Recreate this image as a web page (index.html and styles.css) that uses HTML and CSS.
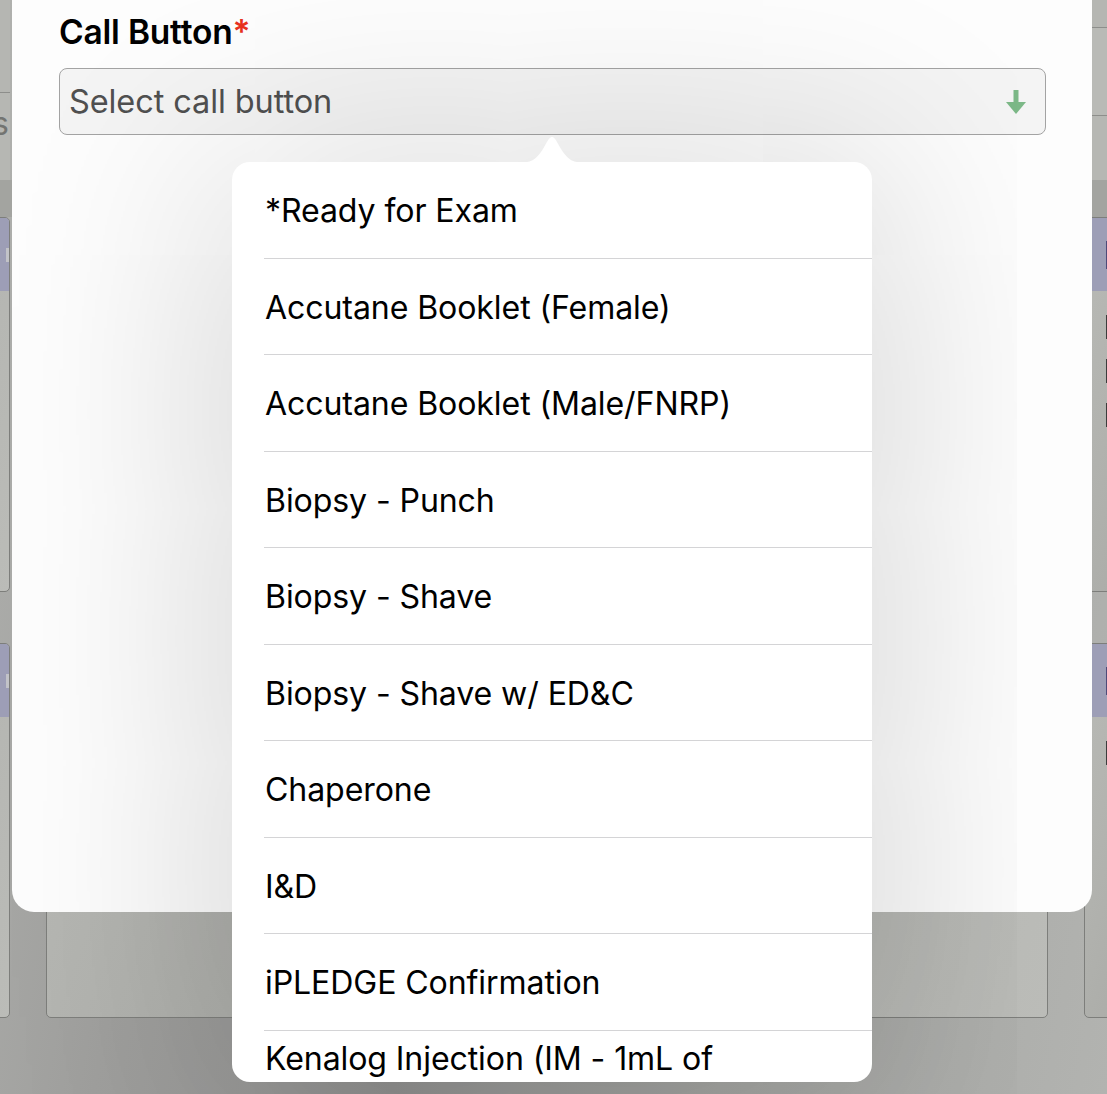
FILE: index.html
```html
<!DOCTYPE html>
<html lang="en">
<head>
<meta charset="utf-8">
<title>Call Button</title>
<link rel="stylesheet" href="styles.css">
</head>
<body>
<div class="app">
  <div class="topbar">
    <div class="top-col top-left"><span class="top-word">s</span></div>
    <div class="top-col top-mid"></div>
    <div class="top-col top-right"></div>
  </div>
  <div class="cards">
    <div class="card"><div class="card-head"><span class="head-mark"></span></div></div>
    <div class="card"><div class="card-head"></div></div>
    <div class="card"><div class="card-head right-head"><span class="head-mark dark"></span></div><div class="card-lines"><span></span><span></span><span></span></div></div>
    <div class="card"><div class="card-head"><span class="head-mark"></span></div></div>
    <div class="card"><div class="card-head"></div></div>
    <div class="card"><div class="card-head right-head"><span class="head-mark dark"></span></div><div class="card-lines"><span></span></div></div>
  </div>
</div>

<div class="modal">
  <label class="field-label">Call Button<span class="req">*</span></label>
  <div class="select">
    <span class="placeholder">Select call button</span>
    <svg class="select-arrow" width="20" height="24" viewBox="0 0 20 24"><rect x="7.5" y="0" width="5" height="13" fill="#7cb887"/><path d="M0 12 L20 12 L10 24 Z" fill="#7cb887"/></svg>
  </div>
</div>

<div class="popover">
  <svg class="pop-arrow" width="70" height="27" viewBox="0 0 70 27"><path d="M0 27 C14 27 19 24 26 13 C30 6 32 1 35 1 C38 1 40 6 44 13 C51 24 56 27 70 27 Z" fill="#ffffff"/></svg>
  <ul class="options">
    <li class="option">*Ready for Exam</li>
    <li class="option">Accutane Booklet (Female)</li>
    <li class="option">Accutane Booklet (Male/FNRP)</li>
    <li class="option">Biopsy - Punch</li>
    <li class="option">Biopsy - Shave</li>
    <li class="option">Biopsy - Shave w/ ED&amp;C</li>
    <li class="option">Chaperone</li>
    <li class="option">I&amp;D</li>
    <li class="option">iPLEDGE Confirmation</li>
    <li class="option wrap">Kenalog Injection (IM - 1mL of 40mg/mL)</li>
  </ul>
</div>
</body>
</html>
```

FILE: styles.css
```css
* { box-sizing: border-box; }
html, body {
  margin: 0;
  padding: 0;
}
body {
  width: 1107px;
  height: 1094px;
  overflow: hidden;
  position: relative;
  font-family: Inter, "Noto Sans", "Liberation Sans", sans-serif;
  background: linear-gradient(100deg, #b0b1ae 0%, #9f9f9d 22%, #929291 45%, #a5a6a3 70%, #b2b3b0 100%);
}

/* ---------- dimmed app behind ---------- */
.app {
  width: 100%;
  height: 100%;
}
.topbar {
  height: 180px;
  display: grid;
  grid-template-columns: 370px 1002px 370px;
  column-gap: 36px;
  margin-left: -360px;
}
.top-col {
  background: #b5b6b2;
}
.top-left {
  background: linear-gradient(#b5b6b2 0 92px, #8d8e8b 92px 93px, #b6b7b3 93px);
  display: flex;
  justify-content: flex-end;
  align-items: flex-start;
  padding-top: 108px;
}
.top-word {
  font-size: 32px;
  color: #737471;
  margin-right: 1px;
  line-height: 32px;
}
.top-right {
  background: linear-gradient(#b5b6b2 0 27px, #8d8e8b 27px 28px, #b9bab6 28px 115px, #8d8e8b 115px 116px, #b6b7b3 116px);
}
.cards {
  display: grid;
  grid-template-columns: 370px 1002px 370px;
  grid-auto-rows: 375px;
  column-gap: 36px;
  row-gap: 51px;
  margin-left: -360px;
  padding-top: 37px;
  background: linear-gradient(#a3a4a0 0 37px, transparent 37px);
}
.card {
  border: 1px solid #7d7e7b;
  border-radius: 5px;
  background: linear-gradient(110deg, #b9bab6, #a9aaa6 40%, #b4b5b1 70%, #bbbcb8);
  overflow: hidden;
}
.card-head {
  height: 73px;
  background: #9d9eb6;
  display: flex;
  justify-content: flex-end;
  align-items: center;
}
.right-head {
  justify-content: flex-start;
}
.head-mark {
  width: 3px;
  height: 14px;
  background: #c2c3c8;
}
.head-mark.dark {
  width: 4px;
  height: 28px;
  margin-left: 21px;
  background: #4e4a78;
}
.card-lines {
  display: flex;
  flex-direction: column;
  gap: 20px;
  padding: 24px 0 0 21px;
}
.card-lines span {
  width: 4px;
  height: 24px;
  background: #3c3c3c;
}

/* ---------- modal sheet ---------- */
.modal {
  position: absolute;
  left: 12px;
  top: 0;
  width: 1080px;
  height: 912px;
  background: #fdfdfd;
  border-radius: 0 0 22px 22px;
  padding: 10px 46px 0 47px;
}
.field-label {
  display: block;
  font-size: 33.5px;
  font-weight: 600;
  color: #000;
  line-height: 44px;
  letter-spacing: -0.2px;
}
.req {
  color: #e8321f;
}
.select {
  margin-top: 14px;
  height: 67px;
  border: 1.5px solid #a3a3a3;
  border-radius: 8px;
  background: #f4f4f4;
  display: flex;
  align-items: center;
  justify-content: space-between;
  padding: 0 19px 0 9px;
}
.placeholder {
  font-size: 32.5px;
  color: #505050;
  letter-spacing: -0.1px;
}
.select-arrow {
  display: block;
}

/* ---------- popover list ---------- */
.popover {
  position: absolute;
  left: 232px;
  top: 162px;
  width: 640px;
  height: 920px;
  background: #fff;
  border-radius: 18px;
  box-shadow: 0 20px 220px rgba(0, 0, 0, 0.22);
}
.pop-arrow {
  position: absolute;
  left: 285px;
  top: -26px;
  display: block;
}
.options {
  list-style: none;
  margin: 0;
  padding: 0;
  height: 100%;
  overflow: hidden;
  border-radius: 18px;
}
.option {
  min-height: 96.5px;
  margin-left: 32px;
  border-bottom: 1px solid #d4d4d6;
  padding: 30px 20px 0 1px;
  font-size: 32.1px;
  line-height: 38px;
  color: #000;
  letter-spacing: -0.1px;
}
.option.wrap {
  padding-top: 9px;
}
```
